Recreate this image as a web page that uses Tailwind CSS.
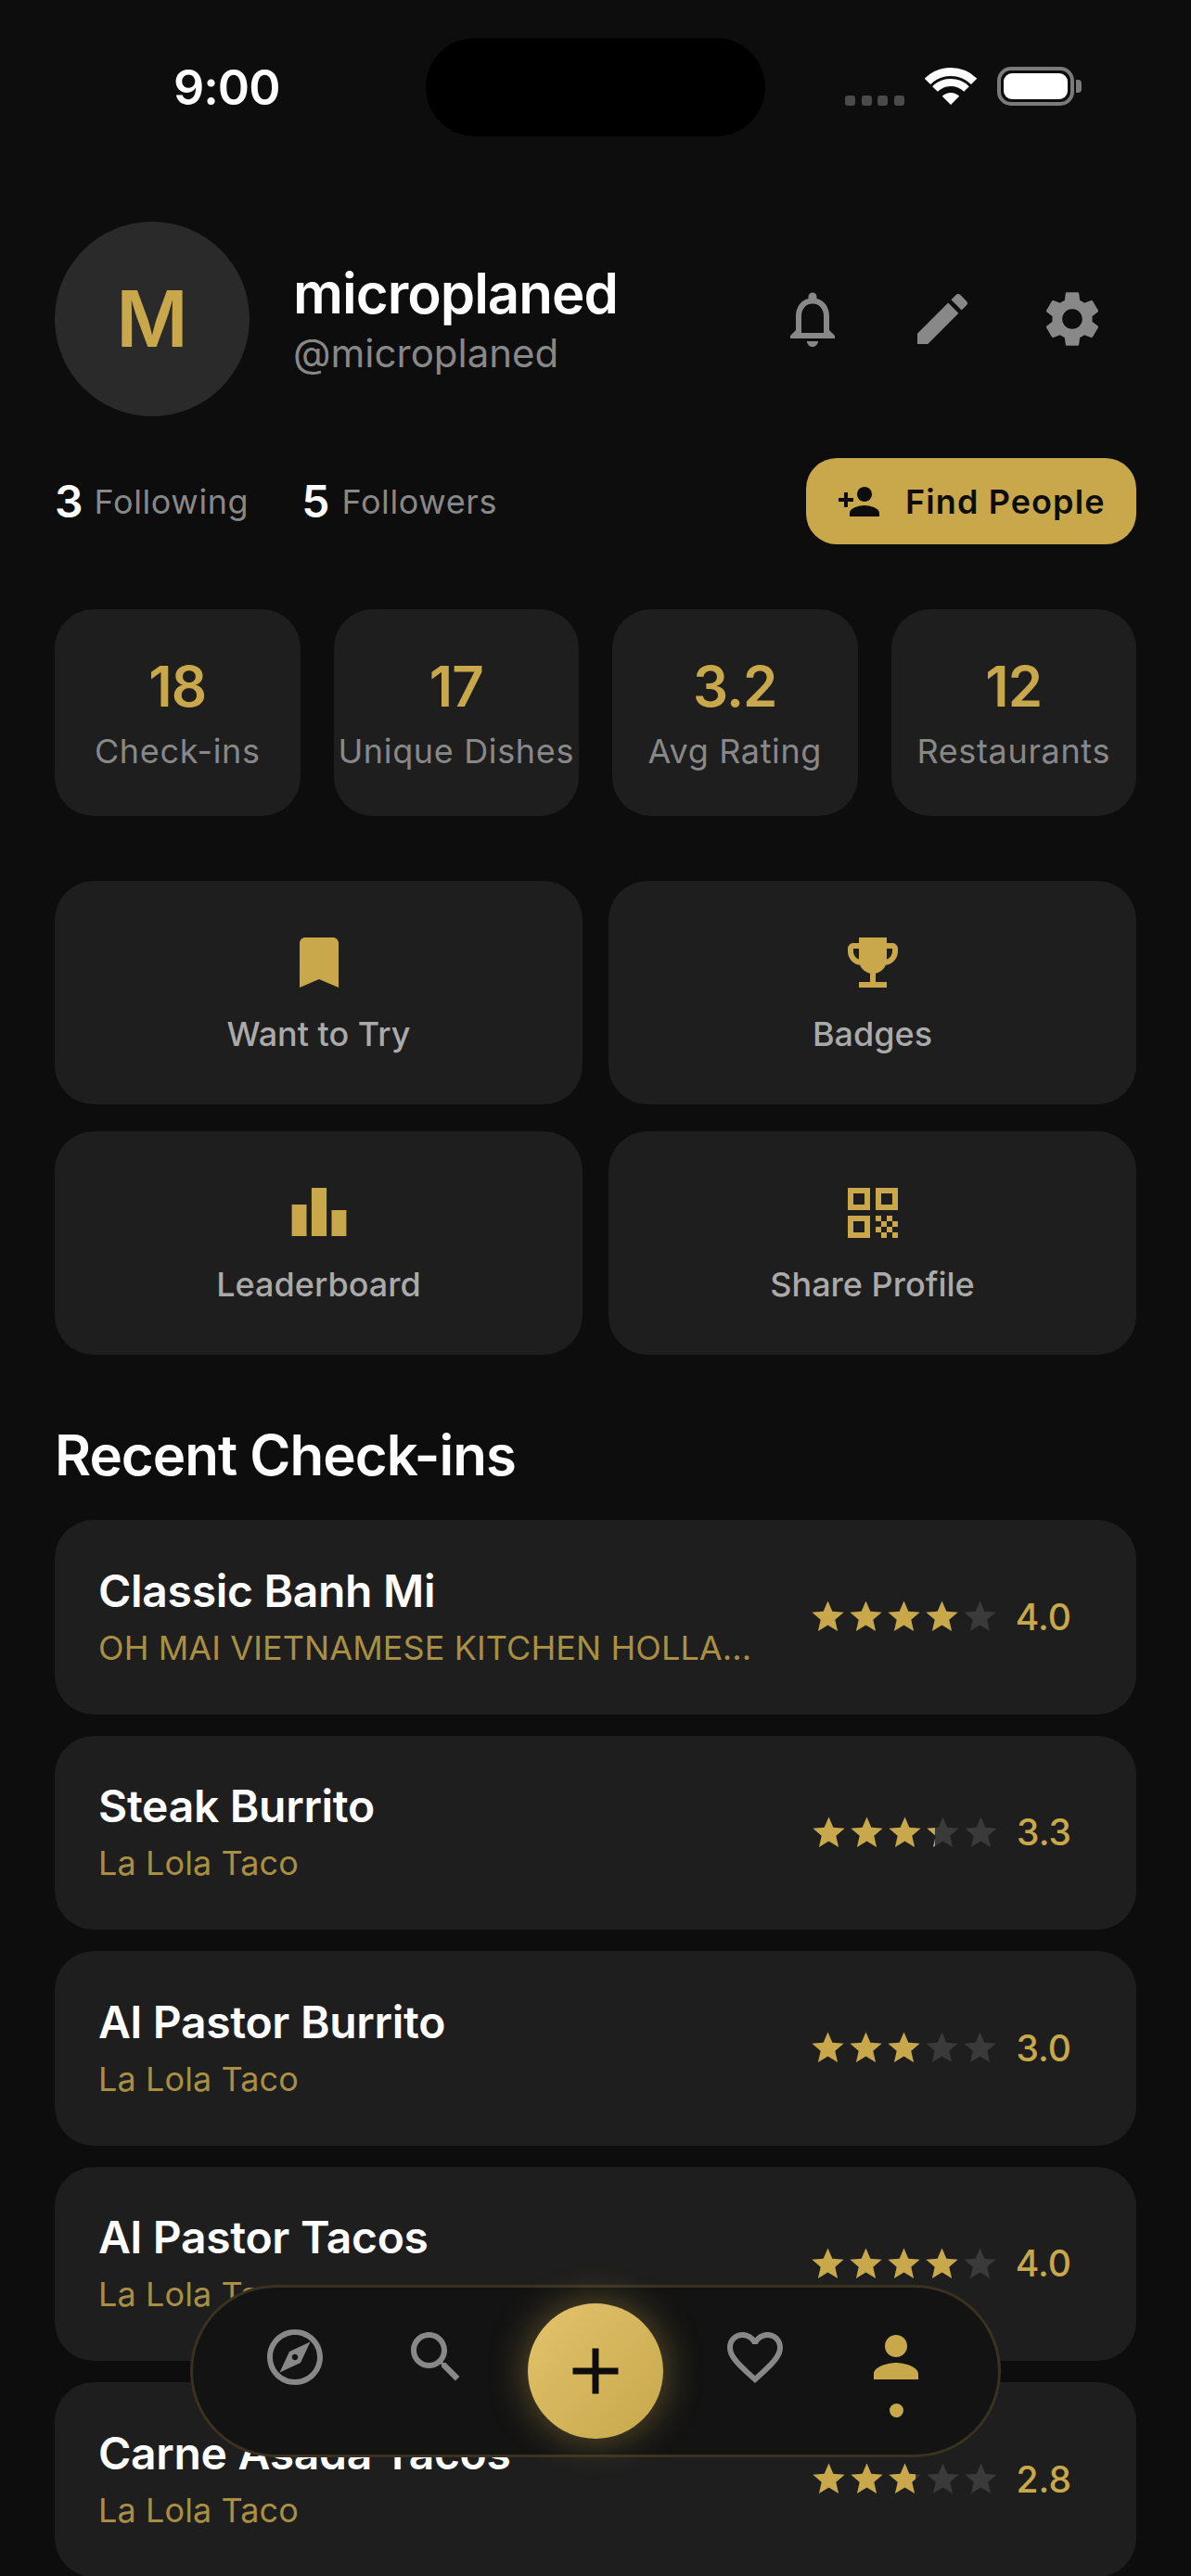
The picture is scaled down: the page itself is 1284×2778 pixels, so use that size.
<!DOCTYPE html>
<html lang="en">
<head>
    <meta charset="UTF-8">
    <meta name="viewport" content="width=device-width, initial-scale=1.0">
    <title>Profile</title>
    <script src="https://cdn.jsdelivr.net/npm/@tailwindcss/browser@4"></script>
</head>
<body class="bg-[#0d0d0d]">

<div class="relative w-[1284px] h-[2778px] overflow-hidden bg-[#0d0d0d] font-['Inter',sans-serif] text-white">

    <!-- status bar -->
    <div class="relative h-[239px]">
        <div class="absolute left-[459px] top-[41px] w-[366px] h-[106px] rounded-full bg-black"></div>
        <div class="absolute left-[187px] top-[62px] text-[52px] leading-[66px] font-semibold tracking-[-1px]">9:00</div>
        <div class="absolute left-[911px] top-[72px] flex items-start">
            <div class="flex gap-[6.5px] mt-[31px] mr-[22px]">
                <div class="w-[11px] h-[11px] rounded-[3px] bg-[#4a4a4a]"></div>
                <div class="w-[11px] h-[11px] rounded-[3px] bg-[#4a4a4a]"></div>
                <div class="w-[11px] h-[11px] rounded-[3px] bg-[#4a4a4a]"></div>
                <div class="w-[11px] h-[11px] rounded-[3px] bg-[#4a4a4a]"></div>
            </div>
            <svg class="w-[56px] h-[41px] mr-[22px]" viewBox="0 0 56 41" fill="none" stroke="#fff">
                <path d="M2.9 15.9A35.5 35.5 0 0 1 53.1 15.9" stroke-width="9"/>
                <path d="M11 24A24 24 0 0 1 45 24" stroke-width="8"/>
                <path d="M28 41L18.8 31.8A13 13 0 0 1 37.2 31.8Z" fill="#fff" stroke="none"/>
            </svg>
            <div class="w-[83px] h-[42px] rounded-[15px] border-[4px] border-[#7a7a7a] p-[3px]">
                <div class="w-full h-full rounded-[9px] bg-white"></div>
            </div>
            <div class="w-[6px] h-[14px] mt-[14px] ml-[2px] rounded-r-[4px] bg-[#7a7a7a]"></div>
        </div>
    </div>

    <div class="px-[59px]">
        <!-- profile -->
        <div class="flex items-center h-[210px]">
            <div class="flex items-center justify-center w-[210px] h-[210px] rounded-full bg-[#2a2a2a] text-[#c8a84b] text-[84px] font-semibold">M</div>
            <div class="ml-[47px]">
                <div class="text-[60px] leading-[72px] font-semibold tracking-[-1px]">microplaned</div>
                <div class="text-[42px] leading-[54px] mt-[2px] text-[#888888]">@microplaned</div>
            </div>
            <div class="ml-auto mr-[33px] flex gap-[68px] text-[#888888]">
                <svg class="w-[72px] h-[72px]" viewBox="0 0 24 24" fill="currentColor"><path d="M12 22c1.1 0 2-.9 2-2h-4c0 1.1.9 2 2 2zm6-6v-5c0-3.07-1.63-5.64-4.5-6.32V4c0-.83-.67-1.5-1.5-1.5s-1.5.67-1.5 1.5v.68C7.64 5.36 6 7.92 6 11v5l-2 2v1h16v-1l-2-2zm-2 1H8v-6c0-2.48 1.51-4.5 4-4.5s4 2.02 4 4.5v6z"/></svg>
                <svg class="w-[72px] h-[72px]" viewBox="0 0 24 24" fill="currentColor"><path d="M3 17.25V21h3.75L17.81 9.94l-3.75-3.75L3 17.25zM20.71 7.04c.39-.39.39-1.02 0-1.41l-2.34-2.34c-.39-.39-1.02-.39-1.41 0l-1.83 1.83 3.75 3.75 1.83-1.83z"/></svg>
                <svg class="w-[72px] h-[72px]" viewBox="0 0 24 24" fill="currentColor"><path d="M19.14 12.94c.04-.3.06-.61.06-.94 0-.32-.02-.64-.07-.94l2.03-1.58c.18-.14.23-.41.12-.61l-1.92-3.32c-.12-.22-.37-.29-.59-.22l-2.39.96c-.5-.38-1.03-.7-1.62-.94l-.36-2.54c-.04-.24-.24-.41-.48-.41h-3.84c-.24 0-.43.17-.47.41l-.36 2.54c-.59.24-1.13.57-1.62.94l-2.39-.96c-.22-.08-.47 0-.59.22L2.74 8.87c-.12.21-.08.47.12.61l2.03 1.58c-.05.3-.09.63-.09.94s.02.64.07.94l-2.03 1.58c-.18.14-.23.41-.12.61l1.92 3.32c.12.22.37.29.59.22l2.39-.96c.5.38 1.03.7 1.62.94l.36 2.54c.05.24.24.41.48.41h3.84c.24 0 .44-.17.47-.41l.36-2.54c.59-.24 1.13-.56 1.62-.94l2.39.96c.22.08.47 0 .59-.22l1.92-3.32c.12-.22.07-.47-.12-.61l-2.01-1.58zM12 15.6c-1.98 0-3.6-1.62-3.6-3.6s1.62-3.6 3.6-3.6 3.6 1.62 3.6 3.6-1.62 3.6-3.6 3.6z"/></svg>
            </div>
        </div>

        <!-- following -->
        <div class="flex items-center h-[93px] mt-[45px]">
            <div class="text-[48px] font-semibold">3</div>
            <div class="ml-[12px] text-[36px] text-[#888888] tracking-[0.6px]">Following</div>
            <div class="ml-[57px] text-[48px] font-semibold">5</div>
            <div class="ml-[13px] text-[36px] text-[#888888] tracking-[0.6px]">Followers</div>
            <div class="ml-auto flex items-center w-[356px] h-[93px] pl-[33px] rounded-[33px] bg-[#c8a84b] text-[#0d0d0d]">
                <svg class="w-[48px] h-[48px]" viewBox="0 0 24 24" fill="currentColor"><path d="M15 12c2.21 0 4-1.79 4-4s-1.79-4-4-4-4 1.79-4 4 1.79 4 4 4zm-9-2V7H4v3H1v2h3v3h2v-3h3v-2H6zm9 4c-2.67 0-8 1.34-8 4v2h16v-2c0-2.66-5.33-4-8-4z"/></svg>
                <span class="ml-[26px] text-[36px] font-semibold tracking-[1.1px]">Find People</span>
            </div>
        </div>

        <!-- stats -->
        <div class="grid grid-cols-4 gap-[36px] mt-[70px]">
            <div class="flex flex-col items-center h-[223px] pt-[47px] rounded-[42px] bg-[#1e1e1e]">
                <div class="text-[60px] leading-[72px] font-semibold tracking-[-1px] text-[#c8a84b]">18</div>
                <div class="mt-[10px] text-[36px] leading-[48px] text-[#888888] tracking-[0.65px] whitespace-nowrap">Check-ins</div>
            </div>
            <div class="flex flex-col items-center h-[223px] pt-[47px] rounded-[42px] bg-[#1e1e1e]">
                <div class="text-[60px] leading-[72px] font-semibold tracking-[-1px] text-[#c8a84b]">17</div>
                <div class="mt-[10px] text-[36px] leading-[48px] text-[#888888] tracking-[0.65px] whitespace-nowrap">Unique Dishes</div>
            </div>
            <div class="flex flex-col items-center h-[223px] pt-[47px] rounded-[42px] bg-[#1e1e1e]">
                <div class="text-[60px] leading-[72px] font-semibold tracking-[-1px] text-[#c8a84b]">3.2</div>
                <div class="mt-[10px] text-[36px] leading-[48px] text-[#888888] tracking-[0.65px] whitespace-nowrap">Avg Rating</div>
            </div>
            <div class="flex flex-col items-center h-[223px] pt-[47px] rounded-[42px] bg-[#1e1e1e]">
                <div class="text-[60px] leading-[72px] font-semibold tracking-[-1px] text-[#c8a84b]">12</div>
                <div class="mt-[10px] text-[36px] leading-[48px] text-[#888888] tracking-[0.65px] whitespace-nowrap">Restaurants</div>
            </div>
        </div>

        <!-- actions -->
        <div class="grid grid-cols-2 gap-x-[28px] gap-y-[29px] mt-[70px]">
            <div class="flex flex-col items-center h-[241px] pt-[52px] rounded-[42px] bg-[#1e1e1e]">
                <svg class="w-[72px] h-[72px] text-[#c8a84b]" viewBox="0 0 24 24" fill="currentColor"><path d="M17 3H7c-1.1 0-1.99.9-1.99 2L5 21l7-3 7 3V5c0-1.1-.9-2-2-2z"/></svg>
                <div class="mt-[17px] text-[36px] leading-[48px] font-medium text-[#aaaaaa]">Want to Try</div>
            </div>
            <div class="flex flex-col items-center h-[241px] pt-[52px] rounded-[42px] bg-[#1e1e1e]">
                <svg class="w-[72px] h-[72px] text-[#c8a84b]" viewBox="0 0 24 24" fill="currentColor"><path d="M19 5h-2V3H7v2H5c-1.1 0-2 .9-2 2v1c0 2.55 1.92 4.63 4.39 4.94.63 1.5 1.98 2.63 3.61 2.96V19H7v2h10v-2h-4v-3.1c1.63-.33 2.98-1.46 3.61-2.96C19.08 12.63 21 10.55 21 8V7c0-1.1-.9-2-2-2zM5 8V7h2v3.82C5.84 10.4 5 9.3 5 8zm14 0c0 1.3-.84 2.4-2 2.82V7h2v1z"/></svg>
                <div class="mt-[17px] text-[36px] leading-[48px] font-medium text-[#aaaaaa]">Badges</div>
            </div>
            <div class="flex flex-col items-center h-[241px] pt-[52px] rounded-[42px] bg-[#1e1e1e]">
                <svg class="w-[72px] h-[72px] text-[#c8a84b]" viewBox="0 0 24 24" fill="currentColor"><path d="M2.2 9h5.3v11.3H2.2zM9.3 3h5.4v17.3H9.3zM16.5 11h5.3v9.3h-5.3z"/></svg>
                <div class="mt-[17px] text-[36px] leading-[48px] font-medium text-[#aaaaaa]">Leaderboard</div>
            </div>
            <div class="flex flex-col items-center h-[241px] pt-[52px] rounded-[42px] bg-[#1e1e1e]">
                <svg class="w-[72px] h-[72px] text-[#c8a84b]" viewBox="0 0 24 24" fill="currentColor"><path d="M3 11h8V3H3v8zm2-6h4v4H5V5zM3 21h8v-8H3v8zm2-6h4v4H5v-4zM13 3v8h8V3h-8zm6 6h-4V5h4v4zM19 19h2v2h-2zM13 13h2v2h-2zM15 15h2v2h-2zM13 17h2v2h-2zM15 19h2v2h-2zM17 17h2v2h-2zM17 13h2v2h-2zM19 15h2v2h-2z"/></svg>
                <div class="mt-[17px] text-[36px] leading-[48px] font-medium text-[#aaaaaa]">Share Profile</div>
            </div>
        </div>

        <h2 class="mt-[72px] text-[60px] leading-[72px] font-semibold tracking-[-1px]">Recent Check-ins</h2>

        <div id="checkins" class="flex flex-col gap-[23px] mt-[34px]"></div>
    </div>

    <!-- bottom nav -->
    <div class="absolute left-[205px] top-[2464px] flex items-start justify-between w-[874px] h-[186px] px-[74px] pt-[39px] rounded-full border-[3px] border-[#3a3220] bg-[#131313]">
        <div class="flex gap-[80px] text-[#888888]">
            <svg class="w-[72px] h-[72px]" viewBox="0 0 24 24" fill="currentColor"><path d="M12 2C6.48 2 2 6.48 2 12s4.48 10 10 10 10-4.48 10-10S17.52 2 12 2zm0 18c-4.41 0-8-3.59-8-8s3.59-8 8-8 8 3.59 8 8-3.59 8-8 8zm-5.5-2.5l7.51-3.49L17.5 6.5 9.99 9.99 6.5 17.5zm5.5-6.6c.61 0 1.1.49 1.1 1.1s-.49 1.1-1.1 1.1-1.1-.49-1.1-1.1.49-1.1 1.1-1.1z"/></svg>
            <svg class="w-[72px] h-[72px]" viewBox="0 0 24 24" fill="currentColor"><path d="M15.5 14h-.79l-.28-.27C15.41 12.59 16 11.11 16 9.5 16 5.91 13.09 3 9.5 3S3 5.91 3 9.5 5.91 16 9.5 16c1.61 0 3.09-.59 4.23-1.57l.27.28v.79l5 4.99L20.49 19l-4.99-5zm-6 0C7.01 14 5 11.99 5 9.5S7.01 5 9.5 5 14 7.01 14 9.5 11.99 14 9.5 14z"/></svg>
        </div>
        <div class="flex items-center justify-center self-center w-[146px] h-[146px] -mt-[39px] rounded-full bg-linear-to-br from-[#e3c36c] to-[#c8a84b] shadow-[0_0_42px_rgba(200,168,75,0.45)] text-[#0d0d0d]">
            <svg class="w-[84px] h-[84px]" viewBox="0 0 24 24" fill="currentColor"><path d="M19 13h-6v6h-2v-6H5v-2h6V5h2v6h6v2z"/></svg>
        </div>
        <div class="flex gap-[80px]">
            <svg class="w-[72px] h-[72px] text-[#888888]" viewBox="0 0 24 24" fill="currentColor"><path d="M16.5 3c-1.74 0-3.41.81-4.5 2.09C10.91 3.81 9.24 3 7.5 3 4.42 3 2 5.42 2 8.5c0 3.78 3.4 6.86 8.55 11.54L12 21.35l1.45-1.32C18.6 15.36 22 12.28 22 8.5 22 5.42 19.58 3 16.5 3zm-4.4 15.55l-.1.1-.1-.1C7.14 14.24 4 11.39 4 8.5 4 6.5 5.5 5 7.5 5c1.54 0 3.04.99 3.57 2.36h1.87C13.46 5.99 14.96 5 16.5 5c2 0 3.5 1.5 3.5 3.5 0 2.89-3.14 5.74-7.9 10.05z"/></svg>
            <div class="flex flex-col items-center text-[#c8a84b]">
                <svg class="w-[72px] h-[72px]" viewBox="0 0 24 24" fill="currentColor"><path d="M12 12c2.21 0 4-1.79 4-4s-1.79-4-4-4-4 1.79-4 4 1.79 4 4 4zm0 2c-2.67 0-8 1.34-8 4v2h16v-2c0-2.66-5.33-4-8-4z"/></svg>
                <div class="w-[15px] h-[15px] mt-[14px] rounded-full bg-[#c8a84b]"></div>
            </div>
        </div>
    </div>
</div>

<script>
const checkins = [
    { name: 'Classic Banh Mi', place: 'OH MAI VIETNAMESE KITCHEN HOLLA...', rating: 4.0 },
    { name: 'Steak Burrito', place: 'La Lola Taco', rating: 3.3 },
    { name: 'Al Pastor Burrito', place: 'La Lola Taco', rating: 3.0 },
    { name: 'Al Pastor Tacos', place: 'La Lola Taco', rating: 4.0 },
    { name: 'Carne Asada Tacos', place: 'La Lola Taco', rating: 2.8 },
];

const starPath = 'M12 17.27L18.18 21l-1.64-7.03L22 9.24l-7.19-.61L12 2 9.19 8.63 2 9.24l5.46 4.73L5.82 21z';

function star(fill) {
    return `<div class="relative w-[41px] h-[41px]">
        <svg class="w-[41px] h-[41px] text-[#3a3a3a]" viewBox="0 0 24 24" fill="currentColor"><path d="${starPath}"/></svg>
        <div class="absolute left-0 top-0 h-[41px] overflow-hidden" style="width:${fill * 100}%">
            <svg class="w-[41px] h-[41px] max-w-none text-[#c8a84b]" viewBox="0 0 24 24" fill="currentColor"><path d="${starPath}"/></svg>
        </div>
    </div>`;
}

document.getElementById('checkins').innerHTML = checkins.map(item => {
    let stars = '';
    for (let i = 0; i < 5; i++) {
        stars += star(Math.max(0, Math.min(1, item.rating - i)));
    }
    return `<div class="flex items-center h-[209.5px] pl-[47px] pr-[70px] rounded-[42px] bg-[#1e1e1e]">
        <div>
            <div class="text-[48px] leading-[58px] font-semibold tracking-[-0.3px]">${item.name}</div>
            <div class="mt-[8px] text-[36px] leading-[48px] text-[#a98f43] tracking-[0.1px] whitespace-nowrap">${item.place}</div>
        </div>
        <div class="ml-auto flex items-center">
            <div class="flex">${stars}</div>
            <div class="ml-[18px] text-[39px] font-medium text-[#c8a84b]">${item.rating.toFixed(1)}</div>
        </div>
    </div>`;
}).join('');
</script>

</body>
</html>
